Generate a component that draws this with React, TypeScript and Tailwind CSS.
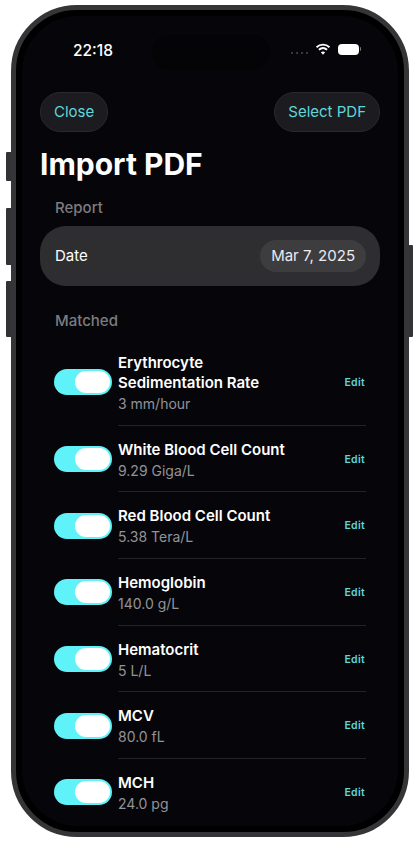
import React from 'react';

const results = [
  { name: 'Erythrocyte Sedimentation Rate', value: '3 mm/hour' },
  { name: 'White Blood Cell Count', value: '9.29 Giga/L' },
  { name: 'Red Blood Cell Count', value: '5.38 Tera/L' },
  { name: 'Hemoglobin', value: '140.0 g/L' },
  { name: 'Hematocrit', value: '5 L/L' },
  { name: 'MCV', value: '80.0 fL' },
  { name: 'MCH', value: '24.0 pg' },
];

const StatusIcons = () => (
  <div className="flex items-center">
    <div className="flex gap-[3px] mr-[7px] mt-[8px]">
      {[0, 1, 2, 3].map((i) => (
        <span key={i} className="w-[2px] h-[2px] rounded-full bg-[#4a4a4c]" />
      ))}
    </div>
    <svg width="16" height="12" viewBox="0 0 16 13" className="mr-[7px]" fill="none" stroke="white" strokeWidth="2" strokeLinecap="butt">
      <path d="M1 4.6C5 .9 11 .9 15 4.6" />
      <path d="M3.6 7.3C6.2 5 9.8 5 12.4 7.3" />
      <path d="M8 12.6 5.7 10c1.3-1.2 3.3-1.2 4.6 0L8 12.6Z" fill="white" stroke="none" />
    </svg>
    <div className="w-[21px] h-[11px] rounded-[4px] bg-white" />
    <span className="w-[1px] h-[4px] ml-[1px] rounded-r bg-[#777]" />
  </div>
);

const Toggle = () => (
  <div className="shrink-0 w-[58px] h-[26px] rounded-full bg-[#5ff2f9] flex items-center justify-end pr-[2px]">
    <div className="w-[35px] h-[22px] rounded-full bg-white" />
  </div>
);

const ResultRow = ({ name, value, last }: { name: string; value: string; last: boolean }) => (
  <div className="flex items-center gap-[6px] px-[14px]">
    <Toggle />
    <div className={`flex-1 min-w-0 flex items-center border-b ${last ? 'border-transparent' : 'border-[#232326]'} pt-[14px] pb-[10.67px]`}>
      <div className="flex-1 min-w-0 pr-[40px]">
        <div className="text-[15px] leading-[20px] font-semibold text-white">{name}</div>
        <div className="text-[14px] leading-[20px] mt-[1px] text-[#939397]">{value}</div>
      </div>
      <span className="text-[10.5px] font-semibold text-[#5fd6dc] tracking-[0.3px] mr-[1px] mb-[1px]">Edit</span>
    </div>
  </div>
);

const App = () => {
  return (
    <div className="w-[420px] h-[841px] bg-white overflow-hidden pl-[11px] pt-[5px] font-['Inter',sans-serif]">
      <div className="relative w-[398px] h-[832px]">
        {/* side buttons */}
        <div className="absolute left-[-5px] top-[147px] w-[5px] h-[29px] rounded-l-[1px] bg-[#333336]" />
        <div className="absolute left-[-5px] top-[203px] w-[5px] h-[57px] rounded-l-[1px] bg-[#333336]" />
        <div className="absolute left-[-5px] top-[276px] w-[5px] h-[56px] rounded-l-[1px] bg-[#333336]" />
        <div className="absolute right-[-4px] top-[240px] w-[4px] h-[92px] rounded-r-[1px] bg-[#333336]" />

        <div className="w-full h-full rounded-[66px] border-[5px] border-[#353537] bg-black p-[6px]">
          <div className="w-full h-full rounded-[56px] bg-[#06060a] overflow-hidden">
            {/* status bar */}
            <div className="relative h-[76px] flex items-start justify-between pt-[26px] pl-[51px] pr-[37px]">
              <span className="text-[15.5px] leading-[18px] font-medium text-white">22:18</span>
              <div className="mt-[1px]">
                <StatusIcons />
              </div>
              <div className="absolute left-[130px] top-[19px] w-[118px] h-[35px] rounded-full bg-[#040407]" />
            </div>

            <div className="flex justify-between px-[18px]">
              <button className="h-[40px] px-[13px] rounded-full bg-[#1c1c20] border border-[#2a2a2e] text-[15px] text-[#5fd6dc]">Close</button>
              <button className="h-[40px] px-[13px] rounded-full bg-[#1c1c20] border border-[#2a2a2e] text-[15px] text-[#5fd6dc]">Select PDF</button>
            </div>

            <div className="px-[18px]">
              <h1 className="mt-[14px] text-[30px] leading-[36px] font-bold text-white">Import PDF</h1>
              <div className="mt-[16px] pl-[15px] text-[15px] leading-[20px] font-medium text-[#7c7c80]">Report</div>
              <div className="mt-[8px] h-[60px] rounded-[26px] bg-[#2e2e30] flex items-center justify-between pl-[15px] pr-[14px]">
                <span className="text-[15px] text-white">Date</span>
                <span className="h-[32px] px-[11px] flex items-center rounded-full bg-[#3d3d3f] text-[15px] text-[#ebebf0]">Mar 7, 2025</span>
              </div>
              <div className="mt-[25px] pl-[15px] text-[15px] leading-[20px] font-medium text-[#7c7c80]">Matched</div>
            </div>

            <div className="mt-[8px] px-[18px]">
              {results.map((r, i) => (
                <ResultRow key={r.name} name={r.name} value={r.value} last={i === results.length - 1} />
              ))}
            </div>
          </div>
        </div>
      </div>
    </div>
  );
};

export default App;
